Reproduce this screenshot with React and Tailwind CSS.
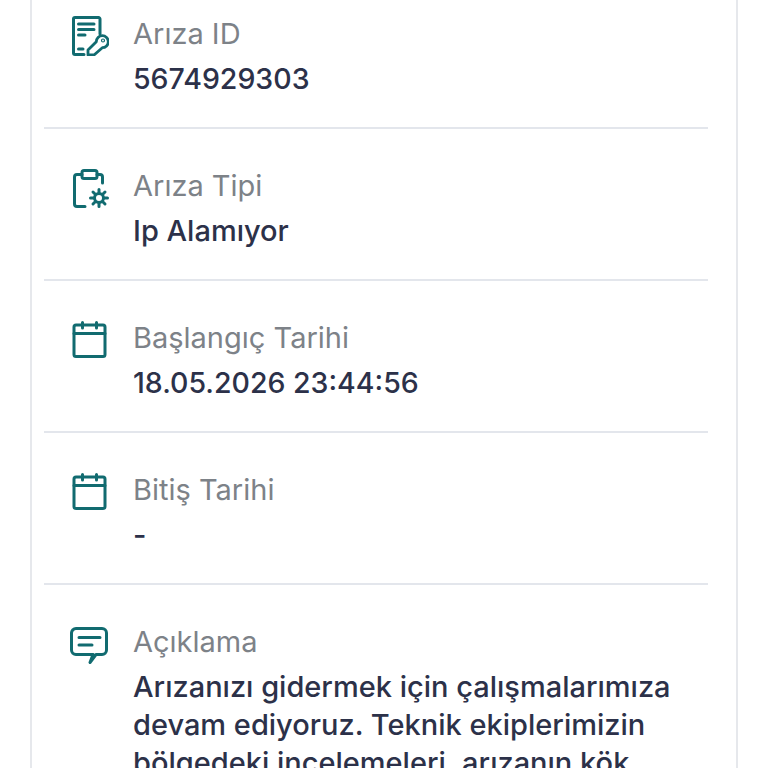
import React from 'react';

const TealIcon = ({ children, className = '' }) => (
  <svg
    viewBox="0 0 40 40"
    fill="none"
    stroke="#116b70"
    strokeWidth="3"
    strokeLinecap="round"
    strokeLinejoin="round"
    className={`w-10 h-10 ${className}`}
  >
    {children}
  </svg>
);

const DocKeyIcon = () => (
  <TealIcon>
    <path d="M15 38.500H6A1.500 1.500 0 0 1 4.500 37V3A1.500 1.500 0 0 1 6 1.500h23.500A1.500 1.500 0 0 1 31 3v15" />
    <path d="M9.500 8h15.500M9.500 13.500h15.500M9.500 19h6.500M9.500 33h4.500" />
    <path d="M19 39v-5l8.300-8.300a6 6 0 1 1 6 6L25 39z" strokeWidth="2.800" />
    <circle cx="34" cy="24.500" r=".6" />
  </TealIcon>
);

const ClipboardGearIcon = () => (
  <TealIcon>
    <path d="M13 6.500H8A2.500 2.500 0 0 0 5.500 9v27A2.500 2.500 0 0 0 8 38.500h8" />
    <path d="M28 6.500h3A2.500 2.500 0 0 1 33.500 9v6" />
    <rect x="13" y="2.500" width="15" height="8" rx="2" />
    <circle cx="30" cy="30" r="4.500" />
    <path d="M30 21.500v3M30 35.500v3M21.500 30h3M35.500 30h3M24 24l2 2M34 34l2 2M24 36l2-2M34 26l2-2" />
  </TealIcon>
);

const CalendarIcon = () => (
  <TealIcon>
    <rect x="5" y="5" width="31" height="31.500" rx="2" />
    <path d="M5 13.500h31M13.500 2.500V8M27.500 2.500V8" />
  </TealIcon>
);

const CommentIcon = () => (
  <TealIcon>
    <path d="M7 4.500h26a4.500 4.500 0 0 1 4.500 4.500v17a4.500 4.500 0 0 1-4.500 4.500h-6L21 38.500l3-8H7A4.500 4.500 0 0 1 2.500 26V9A4.500 4.500 0 0 1 7 4.500z" />
    <path d="M10 13.500h21M10 21h13" />
  </TealIcon>
);

const rows = [
  { label: 'Arıza ID', value: '5674929303', icon: <DocKeyIcon />, numeric: true },
  { label: 'Arıza Tipi', value: 'Ip Alamıyor', icon: <ClipboardGearIcon /> },
  { label: 'Başlangıç Tarihi', value: '18.05.2026 23:44:56', icon: <CalendarIcon />, numeric: true },
  { label: 'Bitiş Tarihi', value: '-', icon: <CalendarIcon /> },
];

const InfoRow = ({ icon, label, value, numeric, last }) => (
  <div className={`flex pt-[39px] ${last ? '' : 'h-[152px] border-b-2 border-[#e3e6ec]'}`}>
    <div className="w-[89px] shrink-0 pl-[25px]">{icon}</div>
    <div className="min-w-0 flex-1 pr-[30px]">
      <p className="text-[29px] leading-[36px] text-[#7d8288]">{label}</p>
      <p className={`mt-[8px] leading-[38px] font-medium text-[#2c3149] ${numeric ? 'text-[28.500px]' : 'text-[29px]'}`}>
        {value}
      </p>
    </div>
  </div>
);

const App = () => {
  return (
    <div className="h-[768px] w-[768px] overflow-hidden bg-white font-['Inter','Noto_Sans',sans-serif]">
      <div className="mx-[30px] -mt-[23px] h-[900px] border-x-2 border-[#e6e8ec] pl-[12px] pr-[28px]">
        {rows.map((row) => (
          <InfoRow key={row.label} {...row} />
        ))}
        <InfoRow
          icon={<CommentIcon />}
          label="Açıklama"
          last
          value="Arızanızı gidermek için çalışmalarımıza devam ediyoruz. Teknik ekiplerimizin bölgedeki incelemeleri, arızanın kök nedenini belirlemeye devam ediyor."
        />
      </div>
    </div>
  );
};

export default App;
